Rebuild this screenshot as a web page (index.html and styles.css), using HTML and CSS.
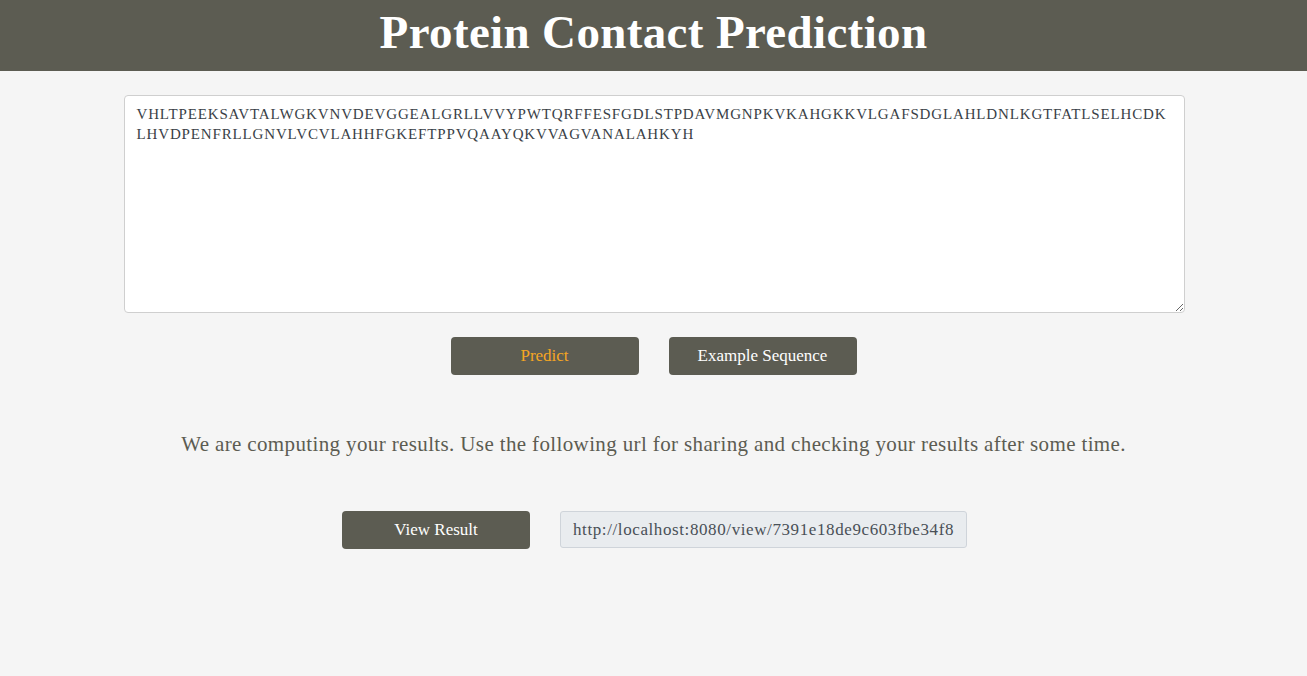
FILE: index.html
```html
<!DOCTYPE html>
<html>
<head>
<meta charset="utf-8">
<title>Protein Contact Prediction</title>
<link rel="stylesheet" href="styles.css">
</head>
<body>
<header class="topbar">
  <h1 class="title">Protein Contact Prediction</h1>
</header>
<main class="content">
  <textarea class="seq" spellcheck="false">VHLTPEEKSAVTALWGKVNVDEVGGEALGRLLVVYPWTQRFFESFGDLSTPDAVMGNPKVKAHGKKVLGAFSDGLAHLDNLKGTFATLSELHCDK
LHVDPENFRLLGNVLVCVLAHHFGKEFTPPVQAAYQKVVAGVANALAHKYH</textarea>
  <div class="actions">
    <button class="btn btn-predict">Predict</button>
    <button class="btn">Example Sequence</button>
  </div>
  <p class="message">We are computing your results. Use the following url for sharing and checking your results after some time.</p>
  <div class="actions result">
    <button class="btn">View Result</button>
    <input class="url" type="text" readonly value="http://localhost:8080/view/7391e18de9c603fbe34f82a1c0d5e7b9">
  </div>
</main>
</body>
</html>
```

FILE: styles.css
```css
* { box-sizing: border-box; }
html, body { margin: 0; padding: 0; }
body {
  background: #f5f5f5;
  font-family: "Liberation Serif", "DejaVu Serif", serif;
  color: #5c5c52;
}
.topbar {
  background: #5c5c52;
  height: 71px;
  display: flex;
  align-items: center;
  justify-content: center;
  padding-bottom: 8px;
}
.title {
  margin: 0;
  color: #fff;
  font-size: 47px;
  font-weight: bold;
  letter-spacing: 0.35px;
}
.content {
  display: flex;
  flex-direction: column;
  align-items: center;
  padding-top: 24px;
}
.seq {
  width: 1061px;
  height: 218px;
  margin-left: 1px;
  padding: 8px 12px;
  border: 1px solid #cfcfcf;
  border-radius: 4px;
  background: #fff;
  color: #3a3f47;
  font-family: "Liberation Serif", serif;
  font-size: 15px;
  line-height: 20px;
  letter-spacing: 0.85px;
  resize: both;
  white-space: pre;
  overflow: hidden;
  display: block;
}
.actions {
  display: flex;
  gap: 30px;
  margin-top: 24px;
}
.btn {
  width: 188px;
  height: 38px;
  border: none;
  border-radius: 4px;
  background: #5c5c52;
  color: #fff;
  font-family: "Liberation Serif", serif;
  font-size: 17px;
  cursor: pointer;
}
.btn-predict { color: #f5a623; }
.message {
  margin: 56px 0 0;
  font-size: 21px;
  line-height: 26px;
  color: #5c5c52;
  letter-spacing: 0.37px;
}
.result {
  margin-top: 54px;
  margin-left: 2px;
}
.url {
  width: 407px;
  height: 37px;
  padding: 0 12px;
  border: 1px solid #cfd4da;
  border-radius: 3px;
  background: #e9ecef;
  color: #495057;
  font-family: "Liberation Serif", serif;
  font-size: 17px;
  letter-spacing: 0.6px;
}
```
